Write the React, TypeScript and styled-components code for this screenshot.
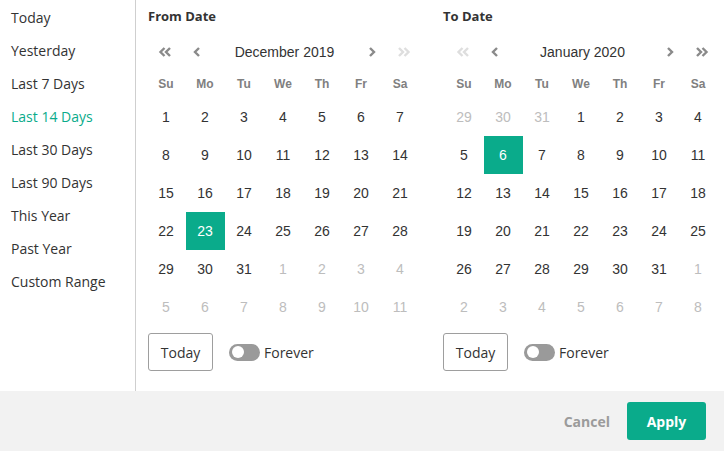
import React from "react";
import styled, { createGlobalStyle } from "styled-components";

const GREEN = "#0aab8b";

const Global = createGlobalStyle`
  html, body {
    margin: 0;
    padding: 0;
    background: #fff;
  }
  body {
    font-family: "Open Sans", "Liberation Sans", sans-serif;
    color: #333;
  }
`;

const Picker = styled.div`
  width: 724px;
  height: 451px;
  display: flex;
  flex-direction: column;
  overflow: hidden;
`;

const Main = styled.div`
  display: flex;
  height: 391px;
`;

const Sidebar = styled.ul`
  list-style: none;
  margin: 0;
  padding: 1px 0 0;
  width: 135px;
  flex-shrink: 0;
  border-right: 1px solid #cfcfcf;
`;

const Preset = styled.li<{ $active?: boolean }>`
  height: 33px;
  line-height: 33px;
  padding-left: 11px;
  font-size: 14px;
  color: ${({ $active }) => ($active ? GREEN : "#333")};
  cursor: pointer;
`;

const Panel = styled.div`
  width: 295px;
  flex-shrink: 0;
  padding: 0 0 0 12px;
  box-sizing: border-box;
`;

const Title = styled.div`
  font-size: 13px;
  font-weight: 700;
  color: #333;
  height: 34px;
  line-height: 33px;
`;

const Nav = styled.div<{ $shift: number }>`
  display: flex;
  align-items: center;
  height: 36px;
  width: 273px;
  margin-left: ${({ $shift }) => $shift - 1}px;
  padding-left: 2px;
  box-sizing: border-box;
`;

const NavButton = styled.span<{ $disabled?: boolean }>`
  width: 32px;
  height: 32px;
  display: flex;
  align-items: center;
  justify-content: center;
  color: ${({ $disabled }) => ($disabled ? "#dedede" : "#8a8a8a")};
`;

const Month = styled.span`
  flex: 1;
  text-align: center;
  font-family: "Liberation Sans", Arial, sans-serif;
  font-size: 14px;
  color: #333;
`;

const Grid = styled.div<{ $shift: number }>`
  display: grid;
  grid-template-columns: repeat(7, 39px);
  margin-left: ${({ $shift }) => $shift - 1.5}px;
  font-family: "Liberation Sans", Arial, sans-serif;
`;

const WeekDay = styled.div`
  height: 28px;
  line-height: 28px;
  text-align: center;
  font-size: 12px;
  font-weight: 700;
  color: #808080;
`;

const Day = styled.div<{ $muted?: boolean; $selected?: boolean }>`
  height: 38px;
  line-height: 38px;
  text-align: center;
  font-size: 14px;
  color: ${({ $muted, $selected }) =>
    $selected ? "#fff" : $muted ? "#bdbdbd" : "#333"};
  background: ${({ $selected }) => ($selected ? GREEN : "transparent")};
`;

const Actions = styled.div`
  display: flex;
  align-items: center;
  margin-top: 7px;
`;

const TodayButton = styled.button`
  width: 65px;
  height: 38px;
  border: 1px solid #9e9e9e;
  border-radius: 3px;
  background: #fff;
  font-family: "Open Sans", sans-serif;
  font-size: 14px;
  color: #333;
  padding: 0;
`;

const Toggle = styled.span`
  width: 31px;
  height: 17px;
  border-radius: 9px;
  background: #9a9a9a;
  margin-left: 16px;
  display: flex;
  align-items: center;
  padding-left: 3px;
  box-sizing: border-box;
`;

const Knob = styled.span`
  width: 12px;
  height: 12px;
  border-radius: 50%;
  background: #fff;
`;

const ToggleLabel = styled.span`
  margin-left: 4px;
  font-size: 14px;
  color: #333;
`;

const Footer = styled.div`
  height: 60px;
  background: #f2f2f2;
  display: flex;
  align-items: center;
  justify-content: flex-end;
  padding-right: 18px;
  gap: 17px;
`;

const Cancel = styled.button`
  border: none;
  background: none;
  padding: 0;
  font-family: "Open Sans", sans-serif;
  font-weight: 700;
  font-size: 14px;
  color: #9b9b9b;
`;

const Apply = styled.button`
  width: 79px;
  height: 38px;
  border: none;
  border-radius: 3px;
  background: ${GREEN};
  color: #fff;
  font-family: "Open Sans", sans-serif;
  font-weight: 700;
  font-size: 14px;
  padding: 0;
`;

const Chevron = ({ dir, double }: { dir: "left" | "right"; double?: boolean }) => {
  const flip = dir === "right" ? "scale(-1,1) translate(-16,0)" : undefined;
  return (
    <svg width="16" height="12" viewBox="0 0 16 12">
      <g transform={flip} fill="none" stroke="currentColor" strokeWidth="2.4">
        {double ? (
          <>
            <path d="M7.5 2 L3.5 6 L7.5 10" />
            <path d="M13 2 L9 6 L13 10" />
          </>
        ) : (
          <path d="M10 2 L6 6 L10 10" />
        )}
      </g>
    </svg>
  );
};

const presets = [
  "Today",
  "Yesterday",
  "Last 7 Days",
  "Last 14 Days",
  "Last 30 Days",
  "Last 90 Days",
  "This Year",
  "Past Year",
  "Custom Range",
];

const weekDays = ["Su", "Mo", "Tu", "We", "Th", "Fr", "Sa"];

type Cell = { n: number; muted: boolean };

// 6 weeks: firstDow = weekday of the 1st, len = days in month, prevLen = days in previous month
const buildMonth = (firstDow: number, len: number, prevLen: number): Cell[] => {
  const cells: Cell[] = [];
  for (let i = firstDow - 1; i >= 0; i--) cells.push({ n: prevLen - i, muted: true });
  for (let d = 1; d <= len; d++) cells.push({ n: d, muted: false });
  let next = 1;
  while (cells.length < 42) cells.push({ n: next++, muted: true });
  return cells;
};

interface CalendarProps {
  title: string;
  month: string;
  cells: Cell[];
  selected: number;
  shift?: number;
  prevYearDisabled?: boolean;
  nextYearDisabled?: boolean;
}

const Calendar = ({
  title,
  month,
  cells,
  selected,
  shift = 0,
  prevYearDisabled,
  nextYearDisabled,
}: CalendarProps) => (
  <Panel>
    <Title>{title}</Title>
    <Nav $shift={shift}>
      <NavButton $disabled={prevYearDisabled}>
        <Chevron dir="left" double />
      </NavButton>
      <NavButton>
        <Chevron dir="left" />
      </NavButton>
      <Month>{month}</Month>
      <NavButton>
        <Chevron dir="right" />
      </NavButton>
      <NavButton $disabled={nextYearDisabled}>
        <Chevron dir="right" double />
      </NavButton>
    </Nav>
    <Grid $shift={shift}>
      {weekDays.map((w) => (
        <WeekDay key={w}>{w}</WeekDay>
      ))}
      {cells.map((c, i) => (
        <Day key={i} $muted={c.muted} $selected={!c.muted && c.n === selected}>
          {c.n}
        </Day>
      ))}
    </Grid>
    <Actions>
      <TodayButton>Today</TodayButton>
      <Toggle>
        <Knob />
      </Toggle>
      <ToggleLabel>Forever</ToggleLabel>
    </Actions>
  </Panel>
);

export default function App() {
  return (
    <Picker>
      <Global />
      <Main>
        <Sidebar>
          {presets.map((p) => (
            <Preset key={p} $active={p === "Last 14 Days"}>
              {p}
            </Preset>
          ))}
        </Sidebar>
        <Calendar
          title="From Date"
          month="December 2019"
          cells={buildMonth(0, 31, 30)}
          selected={23}
          nextYearDisabled
        />
        <Calendar
          title="To Date"
          month="January 2020"
          cells={buildMonth(3, 31, 31)}
          selected={6}
          shift={3}
          prevYearDisabled
        />
      </Main>
      <Footer>
        <Cancel>Cancel</Cancel>
        <Apply>Apply</Apply>
      </Footer>
    </Picker>
  );
}
